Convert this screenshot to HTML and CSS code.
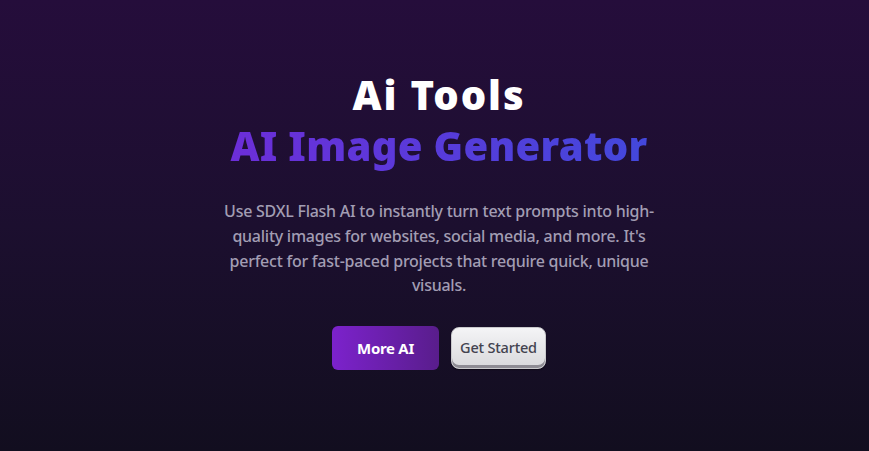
FILE: index.html
```html
<!DOCTYPE html>
<html lang="en">
<head>
<meta charset="utf-8">
<title>Ai Tools - AI Image Generator</title>
<link rel="stylesheet" href="styles.css">
</head>
<body>
<main class="hero">
  <h1 class="title">
    <span class="title-top">Ai Tools</span>
    <span class="title-main">AI Image Generator</span>
  </h1>
  <p class="lead">Use SDXL Flash AI to instantly turn text prompts into high-quality images for websites, social media, and more. It's perfect for fast-paced projects that require quick, unique visuals.</p>
  <div class="actions">
    <a class="btn btn-primary" href="#">More AI</a>
    <a class="btn btn-light" href="#">Get Started</a>
  </div>
</main>
</body>
</html>
```
FILE: styles.css
```css
* { box-sizing: border-box; }
html, body { margin: 0; padding: 0; }
body {
  min-height: 100vh;
  background: linear-gradient(to bottom, #250d3b 0%, #1c0f2f 50%, #120e1f 100%);
  font-family: "Noto Sans", "Open Sans", sans-serif;
  color: #fff;
}
.hero {
  min-height: 100vh;
  display: flex;
  flex-direction: column;
  align-items: center;
  justify-content: center;
  text-align: center;
  padding: 0 16px 12px 25px;
}
.title {
  margin: 0;
  display: flex;
  flex-direction: column;
  align-items: center;
  font-size: 40px;
  line-height: 51px;
  font-weight: 900;
  letter-spacing: 0.3px;
}
.title-top {
  color: #ffffff;
  letter-spacing: 1.9px;
}
.title-main {
  background: linear-gradient(to right, #6c2ed8, #4348dc);
  -webkit-background-clip: text;
  background-clip: text;
  color: transparent;
}
.lead {
  margin: 28px 0 0;
  max-width: 436px;
  font-size: 16px;
  line-height: 24.7px;
  letter-spacing: -0.25px;
  color: #a29db3;
  font-weight: 500;
}
.actions {
  margin-top: 28px;
  display: flex;
  gap: 12px;
  align-items: center;
}
.btn {
  display: inline-flex;
  align-items: center;
  justify-content: center;
  text-decoration: none;
}
.btn-primary {
  width: 107px;
  height: 44px;
  border-radius: 6px;
  background: linear-gradient(to right, #7c22cc, #591d8c);
  color: #fff;
  font-weight: 700;
  font-size: 15px;
  letter-spacing: -0.3px;
}
.btn-light {
  width: 95px;
  height: 42px;
  border-radius: 8px;
  background: linear-gradient(to bottom, #f4f4f6, #d9d9dc);
  border: 1px solid #c9c9cc;
  box-shadow: inset 0 -3px 0 #8e8c94, 0 1px 1px rgba(0,0,0,0.4);
  color: #43434f;
  font-weight: 500;
  font-size: 14.5px;
  letter-spacing: -0.2px;
  padding-bottom: 2px;
}
```
